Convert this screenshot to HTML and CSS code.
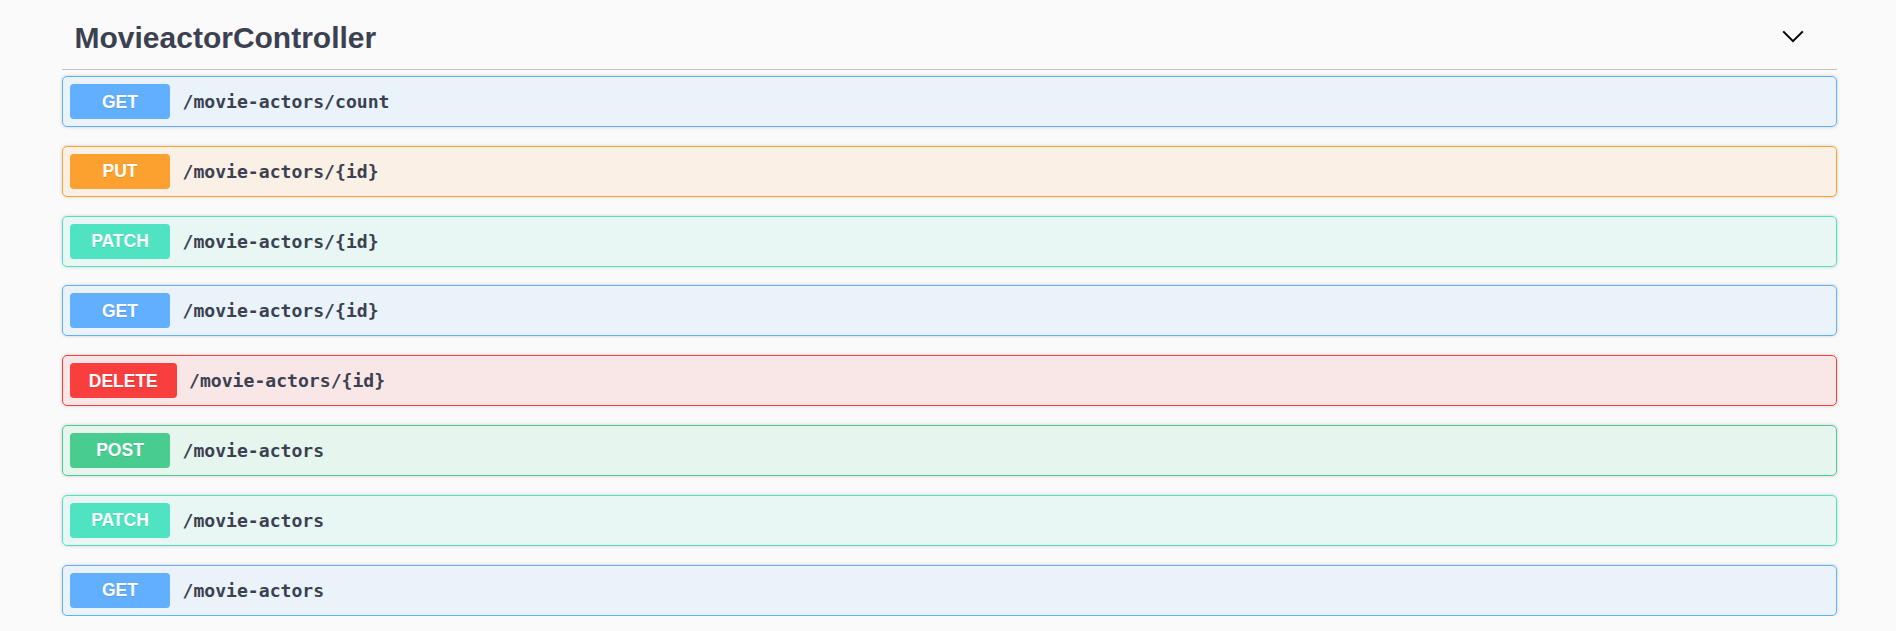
FILE: index.html
```html
<!DOCTYPE html>
<html lang="en">
<head>
<meta charset="utf-8">
<title>MovieactorController</title>
<link rel="stylesheet" href="styles.css">
</head>
<body>
<div class="wrapper">
  <div class="tag">
    <h3 class="tag-title">MovieactorController</h3>
    <svg class="arrow" width="22" height="13" viewBox="0 0 22 13" aria-hidden="true"><path d="M1.2 1.4 L11 11.2 L20.8 1.4" fill="none" stroke="#000" stroke-width="2"/></svg>
  </div>
  <div class="ops">
    <div class="op op-get"><span class="method">GET</span><span class="path">/movie-actors/count</span></div>
    <div class="op op-put"><span class="method">PUT</span><span class="path">/movie-actors/{id}</span></div>
    <div class="op op-patch"><span class="method">PATCH</span><span class="path">/movie-actors/{id}</span></div>
    <div class="op op-get"><span class="method">GET</span><span class="path">/movie-actors/{id}</span></div>
    <div class="op op-delete"><span class="method">DELETE</span><span class="path">/movie-actors/{id}</span></div>
    <div class="op op-post"><span class="method">POST</span><span class="path">/movie-actors</span></div>
    <div class="op op-patch"><span class="method">PATCH</span><span class="path">/movie-actors</span></div>
    <div class="op op-get"><span class="method">GET</span><span class="path">/movie-actors</span></div>
  </div>
</div>
</body>
</html>
```
FILE: styles.css
```css
* { box-sizing: border-box; }
html, body { margin: 0; padding: 0; }
body {
  background: #fafafa;
  font-family: "Liberation Sans", Arial, sans-serif;
  color: #3b4151;
}
.wrapper {
  padding: 0 59px 0 62px;
}
.tag {
  display: flex;
  align-items: center;
  height: 70px;
  padding: 6px 33px 0 12.5px;
  border-bottom: 1px solid rgba(59, 65, 81, 0.3);
  margin-bottom: 6px;
}
.tag-title {
  flex: 1;
  margin: 0;
  font-size: 30px;
  font-weight: 700;
  color: #3b4151;
}
.arrow {
  display: block;
  margin-top: -3px;
}
.ops {
  display: flex;
  flex-direction: column;
  gap: 18.8px;
}
.op {
  display: flex;
  align-items: center;
  height: 51px;
  padding: 7px;
  border: 1px solid #000;
  border-radius: 5px;
  box-shadow: 0 0 3.75px rgba(0, 0, 0, 0.19);
}
.method {
  min-width: 100px;
  padding: 7.5px 18.75px;
  border-radius: 3.75px;
  font-size: 17.5px;
  line-height: 20px;
  font-weight: 700;
  color: #fff;
  text-align: center;
  text-shadow: 0 1.25px 0 rgba(0, 0, 0, 0.1);
}
.path {
  padding: 0 12.5px;
  font-family: "DejaVu Sans Mono", "Liberation Mono", monospace;
  font-size: 18.1px;
  font-weight: 700;
  color: #3b4151;
}
.op-get { background: rgba(97, 175, 254, 0.1); border-color: #61affe; }
.op-get .method { background: #61affe; }
.op-put { background: rgba(252, 161, 48, 0.1); border-color: #fca130; }
.op-put .method { background: #fca130; }
.op-patch { background: rgba(80, 227, 194, 0.1); border-color: #50e3c2; }
.op-patch .method { background: #50e3c2; }
.op-delete { background: rgba(249, 62, 62, 0.1); border-color: #f93e3e; }
.op-delete .method { background: #f93e3e; }
.op-post { background: rgba(73, 204, 144, 0.1); border-color: #49cc90; }
.op-post .method { background: #49cc90; }
```
